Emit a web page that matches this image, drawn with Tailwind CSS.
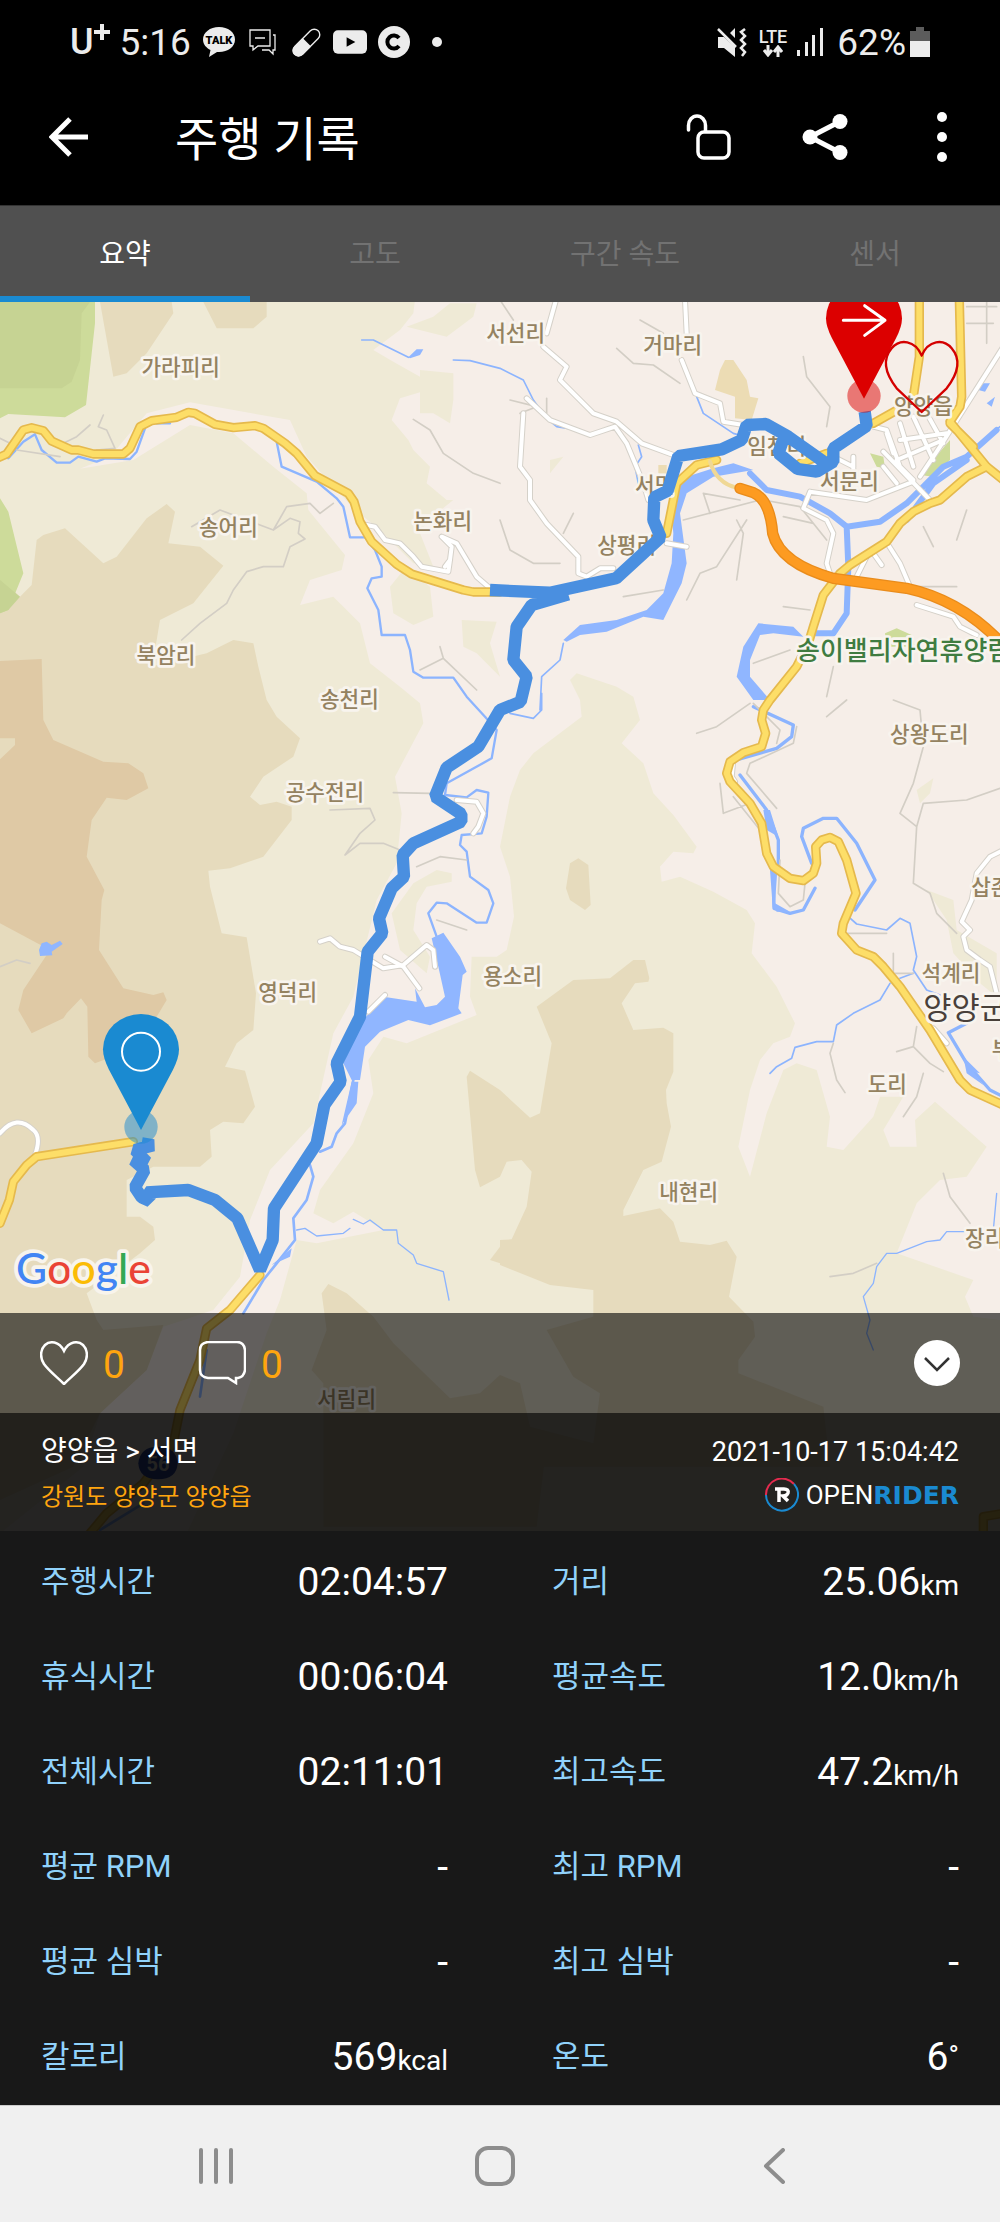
<!DOCTYPE html>
<html lang="ko">
<head>
<meta charset="utf-8">
<meta name="viewport" content="width=device-width, initial-scale=1">
<title>주행 기록</title>
<script src="https://cdn.jsdelivr.net/npm/@tailwindcss/browser@4"></script>
</head>
<body class="bg-black text-white font-[Roboto,'Noto_Sans_CJK_KR',sans-serif]">

<!-- Status bar -->
<div class="flex h-[84px] items-center pl-[70px] pr-[70px] text-[#ececec]">
  <span class="text-[36px] font-medium leading-none flex items-start">U<svg class="h-[16px] w-[16px]" viewBox="0 0 16 16" fill="none" stroke="currentColor" stroke-width="4"><path d="M8 0v16M0 8h16"/></svg></span>
  <span class="ml-[10px] text-[37px] leading-none">5:16</span>
  <svg class="ml-3 h-8 w-8" viewBox="0 0 32 32" fill="currentColor"><path d="M16 1C7 1 0 6.500 0 13.500c0 5 3.500 8.500 7.500 10.500L6 31l8-5h2c9 0 16-5 16-12.500S25 1 16 1z"/><text x="16" y="18" text-anchor="middle" font-size="11" font-weight="900" fill="#000">TALK</text></svg>
  <svg class="ml-[14px] h-[27px] w-[27px]" viewBox="0 0 27 27" fill="none" stroke="currentColor" stroke-width="1.300"><path d="M1 1h20v16H9l-5 4v-4H1zM6 9h10M24 6h2v15h-2v4l-4-4h-7"/></svg>
  <svg class="ml-4 h-[29px] w-[29px]" viewBox="0 0 29 29"><g transform="rotate(45 14.500 14.500)"><rect x="9" y="-2" width="11" height="33" rx="5.500" fill="none" stroke="currentColor" stroke-width="1.400"/><path d="M8.500 14h12v12a6 6 0 0 1-12 0z" fill="currentColor"/></g></svg>
  <svg class="ml-3 h-6 w-[34px]" viewBox="0 0 35 24"><rect width="35" height="24" rx="5" fill="currentColor"/><path d="M14 7v10l9-5z" fill="#000"/></svg>
  <svg class="ml-[11px] h-8 w-8" viewBox="0 0 32 32"><circle cx="16" cy="16" r="16" fill="currentColor"/><path d="M21 12a6.500 6.500 0 1 0 0 8" fill="none" stroke="#000" stroke-width="4"/></svg>
  <span class="ml-[22px] h-[10px] w-[10px] rounded-full bg-[#ececec]"></span>
  <svg class="ml-auto h-[29px] w-[30px]" viewBox="0 0 30 29"><path d="M1 9h6v11H1zM7 9l11 10v10L7 20zM13 5l5-5v10z" fill="currentColor"/><path d="M1 1l18 18M28 1l-4 3 4 4-4 4 4 4-4 4 4 4-3 4" fill="none" stroke="currentColor" stroke-width="2.500"/></svg>
  <span class="ml-3 flex flex-col items-center text-[18px] font-medium leading-[17px]">LTE
    <svg class="h-3 w-5" viewBox="0 0 20 12" fill="none" stroke="currentColor" stroke-width="3"><path d="M5 0v9M1 5l4 5 4-5M15 12V3M11 7l4-5 4 5"/></svg>
  </span>
  <svg class="ml-[10px] h-7 w-[26px]" viewBox="0 0 26 28" fill="currentColor"><path d="M0 22h3v6H0zM8 14h3v14H8zM15 7h3v21h-3zM23 0h3v28h-3z"/></svg>
  <span class="ml-[14px] text-[37px] leading-none">62%</span>
  <svg class="ml-1 h-[30px] w-5" viewBox="0 0 20 30"><path d="M6 0h8v4h6v10H0V4h6z" fill="#5c5c5c"/><path d="M0 14h20v16H0z" fill="currentColor"/></svg>
</div>

<!-- App bar -->
<header class="flex h-[121px] items-center pb-[15px] pl-[49px] pr-[53px]">
  <button aria-label="뒤로"><svg class="block h-10 w-10" viewBox="0 0 40 40" fill="none" stroke="#fff" stroke-width="5"><path d="M39 20H4M21 2L3 20l18 18"/></svg></button>
  <h1 class="ml-[86px] pt-1 text-[47px] leading-none">주행 기록</h1>
  <button class="ml-auto" aria-label="잠금 해제"><svg class="block h-[46px] w-[46px]" viewBox="0 0 46 46" fill="none" stroke="#fff" stroke-width="3.500" stroke-linecap="round"><path d="M2.500 16v-4.500a8.500 9.500 0 0 1 17 0V17"/><rect x="12" y="18" width="31" height="26" rx="6"/></svg></button>
  <button class="ml-[70px]" aria-label="공유"><svg class="block h-[46px] w-[46px]" viewBox="0 0 46 46" fill="#fff" stroke="#fff" stroke-width="5"><path d="M38 7.500L8 23l30 15.500" fill="none"/><g stroke="none"><circle cx="38" cy="7.500" r="7.500"/><circle cx="8" cy="23" r="7.500"/><circle cx="38" cy="38.500" r="7.500"/></g></svg></button>
  <button class="ml-[89px]" aria-label="더보기"><svg class="block h-[52px] w-[10px]" viewBox="0 0 10 52" fill="#fff"><circle cx="5" cy="6" r="5"/><circle cx="5" cy="26" r="5"/><circle cx="5" cy="46" r="5"/></svg></button>
</header>

<!-- Tabs -->
<nav class="grid h-[97px] grid-cols-4 border-t border-[#333] bg-[#505050] text-[28px] text-[#727272]" role="tablist">
  <button role="tab" aria-selected="true" class="border-b-[6px] border-[#1a8ad1] pt-2 text-white">요약</button>
  <button role="tab" class="border-b-[6px] border-transparent pt-2">고도</button>
  <button role="tab" class="border-b-[6px] border-transparent pt-2">구간 속도</button>
  <button role="tab" class="border-b-[6px] border-transparent pt-2">센서</button>
</nav>

<!-- Map with overlay bars -->
<section class="relative">
  <svg class="block w-full" viewBox="0 906 3000 3687" fill="none" stroke-linejoin="round" stroke-linecap="round" role="img" aria-label="주행 경로 지도">
    <defs>
      <path id="road-west" d="M-20 1380L20 1362L70 1290L95 1283L130 1292L155 1323L215 1350L235 1350L280 1362H370L390 1345L420 1280L455 1262L530 1252L565 1237L585 1240L645 1273L700 1283L765 1277L790 1285L855 1330L890 1360L945 1427L1045 1480L1062 1505L1080 1565L1115 1625L1190 1693L1235 1722L1390 1770L1420 1776H1500"/>
      <path id="road-nw" d="M2758 900V1070L2740 1190M2878 900L2885 1190L2880 1220L2850 1265L2960 1400L3010 1440M2620 1270L2700 1225M2850 1270L2920 1340"/>
      <path id="road-sm" d="M2000 1600L2030 1450L2090 1395L2150 1380M2480 1360L2400 1390"/>
      <path id="road-east" d="M2960 1400L2900 1430L2820 1500L2790 1510L2740 1535L2700 1570L2660 1625L2550 1695L2520 1720L2470 1785L2440 1880L2425 1930L2390 2000L2310 2100L2290 2130L2285 2160L2297 2200L2285 2240L2230 2258L2190 2285L2180 2320L2190 2345L2250 2410L2285 2470L2300 2560L2320 2600L2370 2635L2410 2642L2440 2620L2450 2590L2447 2540L2465 2520L2490 2512L2515 2525L2540 2580L2568 2680L2530 2770L2525 2800L2570 2850L2620 2870L2650 2900L2700 2960L2790 3090L2880 3240L2910 3270L3020 3320"/>
      <path id="road-sw" d="M400 3425L110 3470L80 3495L40 3545L28 3600L0 3670M780 3825L690 3930L620 3985L600 4080L540 4230L520 4330L430 4450L320 4540L270 4600M2950 4600V4550L3010 4540"/>
      <path id="highway" d="M2220 1465L2260 1478Q2310 1500 2318 1600Q2340 1690 2500 1735L2720 1765Q2880 1800 3000 1925"/>
      <path id="lanes" d="M1668 900L1640 1000M1630 1040L1700 1100L1680 1140L1780 1240L1850 1265L1925 1330L2020 1365M1580 1195L1650 1260L1770 1305L1845 1280L1880 1330L1930 1450L1945 1500M1570 1240L1560 1400L1590 1440V1500L1640 1570L1735 1670V1720L1760 1730L1800 1705H1840M2055 900L2060 1000M2045 1080L2085 1180L2160 1210L2170 1265L2230 1275M3010 1040L2820 1340L2760 1430M2650 1355L2790 1500M2690 1450L2650 1400M2430 1475L2410 1525L2480 1560L2500 1600L2480 1690L2490 1720M2430 1475L2600 1500L2740 1445M2665 1635L2700 1690L2730 1760M2750 1815L2860 1850L2880 1880L2930 1905M2600 1670L2570 1730M2620 1660L2645 1695M2620 1280L2660 1290L2700 1400L2740 1440M2700 1320L2840 1300M2690 1380L2830 1320M2740 1250L2800 1380M2700 1270L2740 1400M2780 1240L2830 1330M2660 1300L2680 1360M2500 1370L2560 1400M2560 1370V1410M2000 1630L2060 1640M1090 1573L1125 1580L1155 1620L1200 1630L1240 1670L1265 1700L1345 1715L1350 1680L1355 1640L1325 1610L1370 1630L1430 1730L1470 1765M1350 1680L1335 1700M1370 2400L1430 2405L1450 2440L1435 2480L1420 2500M960 2825L990 2815L1020 2840L1060 2850L1150 2905L1210 2895L1280 2835L1300 2850L1305 2900M1155 2870L1210 2900L1258 2965M1105 3035L1155 2985M3010 2550L2970 2570L2930 2620L2915 2700L2885 2765L2910 2790L2890 2810L2900 2850L2940 2880L2970 2900L2990 2980M0 3400Q50 3340 100 3390Q125 3410 105 3465M2200 2280L2195 2330L2205 2345M2800 3085L2840 3130"/>
    </defs>

    <!-- Terrain -->
    <path fill="#f6eee8" d="M0 900h3000v3700H0z"/>
    <g fill="#efead6">
      <path d="M0 900H1245L1240 940L1200 990L1120 1050L1180 1085L1260 1130L1265 1175L1200 1195L1175 1260L1225 1320L1240 1350L1290 1400L1280 1450L1340 1500L1360 1500L1285 1560L1260 1600L1300 1700L1240 1690L1140 1590L1060 1525L920 1370L870 1260L570 1207L440 1240L330 1370L240 1406L400 1380L570 1275L700 1300L820 1400L920 1480L925 1530L1035 1665L1025 1710L930 1740L900 1815L1000 1790L1080 1870L1110 1990L1200 2060L1260 2110L1270 2170L1185 2330L1205 2440L1190 2590L1130 2700L1060 2990L1000 3100L960 3280L940 3370L810 3510L750 3660L720 3830L640 3930L490 3980L440 4110L300 4240L250 4400L0 4600z"/>
      <path d="M1740 2100L1745 2150L1600 2260L1560 2310L1530 2390L1500 2540L1530 2630L1542 2750L1520 2850L1490 2870L1415 2870L1410 2990L1430 3045L1220 3130L1150 3110L1105 3180L1120 3280L1060 3430L960 3570L940 3640L1000 3670L1060 3635L1150 3690L950 3730L890 3720L840 3900L800 4000L700 4300L560 4600H3000V3960L2920 3950L2895 3890L2920 3840L2690 3760L2750 3610L2820 3540L2900 3530L2960 3440L2805 3305L2745 3360L2750 3440L2670 3440L2650 3390L2710 3290H2640L2620 3350L2530 3450L2480 3440L2490 3350L2450 3210L2390 3190L2350 3210L2300 3340L2250 3530L2215 3440L2250 3270L2280 3180L2320 3130L2370 3110L2385 3070L2330 2960L2255 2860L2265 2770L2240 2730L2140 2675L2040 2630L1985 2645L1980 2600L2020 2555L2080 2560L2090 2540L2020 2445L1960 2380L1930 2290L1865 2230L1920 2160L1900 2090L1850 2060L1730 2020L1710 2040z"/>
      <path d="M1175 2740L1240 2650L1310 2610L1355 2620V2645L1280 2660L1250 2710L1240 2790L1290 2870L1280 2920L1200 2850zM1170 1760L1215 1705L1290 1760L1300 1850L1240 1875L1180 1840zM1260 1110L1360 1120V1200L1350 1270L1300 1240L1260 1240zM1220 980L1300 950L1350 910L1430 910L1420 950L1340 1010zM1385 1860L1490 1865L1470 1930L1500 2030L1430 1960L1390 1940zM2750 2370L2800 2335L2790 2380L2760 2410zM2780 2670L2860 2700L2870 2790L2990 2860V2990L2940 2950L2860 2860L2840 2760zM1650 1380L1690 1370L1650 1420z"/>
    </g>
    <g fill="#e6dbbd">
      <path d="M300 906H515L520 940L440 1060L380 1120L340 1130zM610 906H800L800 950L760 985L650 985zM0 1735L60 1790L95 1755L110 1620L130 1605L195 1585L310 1690L350 1670L440 1555L500 1512L525 1535L505 1630L600 1640L670 1697L580 1810L480 1860L465 1950L450 2000L620 1960L700 1920L760 1930L775 2000L800 2100L830 2150L900 2215L880 2270L790 2330L750 2390L780 2415L830 2405L875 2420V2460L790 2570L690 2605L625 2612L630 2660L665 2800L740 2812L768 2980L760 3090L710 3130L675 3200L735 3212L765 3320L730 3370L670 3365L630 3390L635 3470L600 3500L460 3500L380 3540V3650L420 3650L460 3680L465 3720L420 3760L260 3880L290 3960L310 3990L490 3975L440 4110L300 4240L220 4400L0 4500z"/>
      <path d="M1735 2575L1765 2595L1772 2715L1755 2730L1710 2700L1698 2665L1710 2590zM1830 2935L1900 2880L1935 2880L1948 2935L1945 2945L1905 2950L1865 3010L1900 3090L1990 3083L2020 3100V3215L1998 3270L2000 3310L2013 3380L1985 3485L1930 3510L1870 3630V3648L1980 3625L2020 3665L2040 3725L2130 3735L2180 3722L2210 3770L2187 3890L2260 3965L2265 4010L2215 4080V4120L2470 4220L2490 4400H1500L1560 4320L1640 4330L1610 4580H970V4150L935 4110L980 3990L965 3880L985 3852L1040 3880L1120 3950L1180 4030L1350 4195L1440 4180L1500 4125L1560 4150L1590 4280L1780 4330L1800 4180L1720 4130L1640 3990L1780 3950L1780 3870L1650 3855L1500 3795V3720L1535 3718L1580 3620L1595 3515L1565 3480L1520 3485L1500 3530L1440 3562L1425 3510L1400 3230L1410 3212L1500 3270L1590 3353L1620 3340L1655 3130L1610 3020L1720 2940z"/>
      <path fill="#ecdcb4" d="M2175 1080L2200 1080L2240 1140L2250 1190L2275 1195L2255 1260L2205 1255V1190L2145 1170L2160 1110zM1975 1395L2000 1395V1430L1975 1420z"/>
      <path d="M1470 3780L1500 3740V3790z"/>
    </g>
    <path fill="#dfc9a5" d="M0 1983L125 1977L130 2160L160 2220L310 2285L385 2290L430 2320L445 2365L380 2400L320 2393L275 2460L260 2570L313 2670L305 2700L297 2850L370 2965L460 2985L490 2977L500 3000L470 3050V3120L285 3190L265 3170L262 3020L243 2995L200 3040L190 3055L95 3100L55 3030L70 2970L150 2850L0 2770z"/>
    <path fill="#e6dbbd" d="M0 2215H45L45 2235L0 2278z"/>
    <path fill="#cddb9a" d="M0 906H285V970L258 1215L195 1252L25 1242L0 1255zM0 1495L25 1535L70 1720L25 1830L0 1840zM2610 1360L2650 1370L2655 1405L2630 1400zM2850 1320L2850 1380L2800 1430L2760 1425zM2655 1900L2690 1885L2735 1905L2745 1940H2660z"/>
    <path fill="#c6d393" d="M0 906H270L245 940L240 1080L215 1145L185 1165H0zM0 1740L60 1790L25 1830L0 1840z"/>

    <!-- Rivers -->
    <g stroke="#8cb4fe" stroke-width="7">
      <path d="M25 1375L70 1325L105 1303L125 1350L170 1388H210L235 1370L290 1385L315 1375L390 1377L410 1355L435 1285M470 1270H510M830 1325L845 1400L950 1445L1010 1495L1030 1520L1050 1612H1095L1125 1650L1145 1700V1730L1115 1735L1102 1765L1135 1830L1145 1905L1215 1905L1230 1950L1240 2015L1270 2033H1360L1400 2090L1455 2150L1490 2190L1475 2275L1340 2350L1335 2385L1400 2392L1430 2370L1465 2378L1460 2450L1445 2500L1385 2505L1380 2535L1400 2555L1410 2630L1465 2670L1480 2710L1460 2768H1430L1340 2710L1310 2708L1285 2740L1310 2810"/>
      <path d="M1085 1020H1120L1225 1072M1360 1080L1410 1082L1500 1105L1570 1140L1600 1200L1640 1255L1670 1280L1730 1290M1915 1335L1925 1370L1905 1400L1915 1450M2090 1190L2110 1240L2200 1300L2270 1320M2930 1340L3000 1280M1620 2130L1625 2030L1680 1980L1690 1930M1625 2080V2130L1600 2155L1530 2140" stroke-width="5"/>
      <path d="M2545 2750L2570 2772L2660 2790L2700 2755L2730 2770L2750 2870L2740 2910L2780 2970L2820 2985M2670 2950L2640 3000L2560 3040L2510 3075L2500 3125H2450L2385 3142L2375 3175L2330 3200L2310 3220M2740 2920L2700 2935" stroke-width="5"/>
      <path d="M2260 2120L2380 2175L2375 2210L2330 2245L2220 2277M2220 2325L2300 2430L2335 2520L2335 2600L2320 2620L2322 2725L2370 2740L2410 2730L2445 2665M2435 2590L2405 2510L2410 2485L2470 2455H2510L2570 2530L2625 2640L2565 2730M2900 3070L2845 3098L2900 3190L2970 3270L3000 3285" stroke-width="10"/>
      <path d="M890 3690L915 3685L950 3708L1030 3700L1050 3685M1060 3658L1090 3672L1110 3660L1150 3690H1190L1195 3730L1240 3765L1250 3790L1330 3815L1347 3900M2990 3580L2980 3690L2960 3695L2840 3695L2820 3720L2780 3725L2690 3760L2660 3760L2630 3800L2620 3850L2590 3890L2610 3960L2600 4000L2620 4050" stroke-width="4"/>
      <path d="M1060 3240L1035 3370L1010 3400L995 3440L960 3455M930 3495L940 3530L920 3600L880 3655L885 3720L830 3790L790 3840L730 3940M620 4050L600 4190M430 4510L300 4590" stroke-width="8"/>
      <path d="M2250 1420L2300 1470L2400 1490L2490 1540L2540 1580L2640 1565L2720 1510L2830 1400L2900 1370L2990 1290M2540 1580L2545 1700L2540 1840L2500 1900L2430 1900M2720 1560L2800 1450L2900 1380" stroke-width="18"/>
    </g>
    <g fill="#90b6ff">
      <path d="M2140 1405L2060 1430L2010 1500L2020 1600L2015 1690L1990 1780L1940 1830L1850 1860L1740 1875L1690 1920L1700 1925L1740 1905L1820 1895L1930 1850L1990 1860L2015 1810L2045 1750L2060 1690L2040 1540L2060 1480L2140 1430L2260 1410L2200 1390zM2275 1870L2380 1880L2410 1910L2320 1900L2280 1905L2250 1980V2030L2310 2100L2260 2100L2210 2030L2230 1940zM2940 1150L2970 1150L2955 1175L2935 1170zM2960 1210L2985 1190L2975 1220zM1225 1072L1250 1048H1270L1260 1065L1230 1075z"/>
      <path d="M1295 2815L1330 2798L1380 2870L1400 2915L1388 2925L1375 3025L1385 3040L1290 3076L1225 3060L1140 3095L1095 3140L1080 3240H1055L1030 3190L1090 3060L1150 2990L1250 3005L1245 2965L1275 3022L1310 3015L1335 2990L1315 2900zM1055 3245H1075L1070 3310L1025 3375zM117 2850L125 2830L140 2825L155 2835L180 2822L188 2832L155 2855L157 2866L120 2868zM2290 2430L2310 2430L2335 2510L2300 2490zM2310 2610H2332L2325 2710L2370 2735L2330 2735L2318 2720zM2890 3170L2940 3220L2920 3215L2950 3255L2900 3220zM815 3795L875 3745L870 3770z"/>
    </g>

    <!-- Footpaths and minor streets -->
    <g stroke="#d3cec5" stroke-width="5">
      <path d="M190 1330L230 1310L270 1275M290 1350L345 1345L320 1290L295 1280L310 1245M50 1350L180 1370M0 1315L30 1330M575 1580L660 1530L780 1575L820 1590L860 1520L930 1510L960 1540L1000 1510M820 1590L870 1555L900 1565L895 1600L915 1617L870 1640L850 1700L790 1700L740 1715L700 1770L680 1810L600 1870L545 1920"/>
      <path d="M1240 1258L1290 1290L1330 1360L1420 1420L1500 1450M1320 1940L1330 1975L1260 2010M1330 1975L1430 2070M1180 2378L1290 2380M990 2430L1110 2425L1125 2460L1080 2500L1035 2565L1080 2530L1150 2530L1200 2550M1250 2600L1320 2570L1400 2580M1310 2760L1400 2790"/>
      <path d="M1850 1045L1900 1090L1960 1095L2040 1150M1920 960L1990 1000M2410 1070L2420 1130L2490 1220L2480 1280M1500 900L1540 960M1530 1200L1610 1220L1560 1240M2050 1560L2280 1500M2130 1540L2110 1480L2220 1500M2210 1560L2230 1600L2210 1740M2060 1800L2100 1720L2150 1700L2240 1560M1870 1790L1990 1770M1720 1540L1690 1600M1500 1560L1530 1650L1600 1690L1680 1690M2290 1500L2400 1520L2480 1620M2350 1550L2440 1570M2770 1580L2800 1640M2900 1530L2870 1620M2760 1760L2870 1760M2350 1820L2430 1830M2260 1990L2370 1950M2090 2200L2150 2180L2250 2110M2540 2100L2480 2150M2680 2100L2760 2130L2770 2240L2740 2350L2700 2440L2750 2480L2740 2650L2790 2680L2810 2740L2870 2800M2750 2480L2770 2410L2900 2400L3000 2365M2160 2350L2170 2440L2250 2410M2200 2390L2280 2490M2340 2580L2335 2680L2370 2720L2410 2700L2415 2650M2540 2800L2660 2800M2680 2860V2920L2740 2920M2500 3130L2490 3160L2510 3240L2535 3278M2750 3080L2740 3140L2690 3155M2740 3140L2790 3190L2830 3215M2770 3220L2750 3290L2710 3350M2830 3520L2850 3590L2910 3670M2490 3830L2560 3820L2630 3790M0 2900L50 2880L90 2890M2870 1000V1080M2900 920H2990M2900 970H2980M2960 900V1030"/>
      <path d="M2260 2110L2340 2190L2330 2230M2390 2180L2380 2230L2250 2290L2240 2320L2330 2425M1640 1195V1240M2500 2000L2480 2090"/>
    </g>
    <g stroke="#d5d1c9" stroke-width="18"><use href="#lanes"/></g>
    <g stroke="#fff" stroke-width="12"><use href="#lanes"/></g>

    <!-- Trunk roads -->
    <g stroke="#e5b94d" stroke-width="28"><use href="#road-west"/><use href="#road-nw"/><use href="#road-east"/><use href="#road-sw"/><use href="#road-sm"/></g>
    <g stroke="#fdde68" stroke-width="18"><use href="#road-west"/><use href="#road-nw"/><use href="#road-east"/><use href="#road-sw"/><use href="#road-sm"/></g>
    <path stroke="#f0d895" stroke-width="12" d="M2130 1385Q2150 1450 2210 1463"/>
    <use href="#highway" stroke="#e98c1c" stroke-width="34"/>
    <use href="#highway" stroke="#fd9b21" stroke-width="26"/>

    <!-- Route 56 shield -->
    <g><path fill="#304ba8" d="M415 4390Q420 4340 474 4340Q530 4340 533 4390Q530 4438 474 4438Q418 4438 415 4390z"/><text x="474" y="4412" text-anchor="middle" font-size="60" font-weight="700" fill="#e8e4dc">56</text></g>

    <!-- Place names -->
    <g font-size="64" font-weight="500" fill="#948260" stroke="#f8f4ee" stroke-width="16" paint-order="stroke" text-anchor="middle">
      <text x="542" y="1124">가라피리</text><text x="1547" y="1024">서선리</text><text x="2018" y="1059">거마리</text><text x="2770" y="1241">양양읍</text><text x="2330" y="1361">임천리</text><text x="1964" y="1480">서면</text><text x="2548" y="1468">서문리</text><text x="685" y="1605">송어리</text><text x="1328" y="1586">논화리</text><text x="1880" y="1658">상평리</text><text x="498" y="1990">북암리</text><text x="1048" y="2122">송천리</text><text x="975" y="2401">공수전리</text><text x="2788" y="2225">상왕도리</text><text x="3002" y="2684">삽존리</text><text x="863" y="2999">영덕리</text><text x="1538" y="2951">용소리</text><text x="2853" y="2943">석계리</text><text x="3093" y="3171">부소치리</text><text x="2662" y="3277">도리</text><text x="2066" y="3600">내현리</text><text x="2954" y="3738">장리</text><text x="1040" y="4222">서림리</text>
      <text x="2388" y="1981" font-size="78" fill="#3f7c41" text-anchor="start">송이밸리자연휴양림</text>
      <text x="2770" y="3057" font-size="92" font-weight="400" fill="#49403a" text-anchor="start">양양군</text>
    </g>

    <!-- Recorded track -->
    <path stroke="#4a8fe0" stroke-width="37" stroke-linecap="butt" stroke-linejoin="bevel" d="M2594 1235L2600 1278L2500 1345V1385L2450 1415L2393 1407L2335 1360L2350 1318M2485 1395L2365 1310L2298 1272L2240 1275L2225 1320L2165 1348L2035 1368L2003 1472L1963 1492L1960 1560L1982 1612L1848 1735L1650 1778L1470 1770M1705 1783L1595 1815L1550 1880L1540 1980L1580 2030L1562 2105L1500 2130L1435 2240L1340 2303L1305 2390L1384 2442V2465L1240 2530L1208 2565L1212 2630L1175 2665L1137 2755L1147 2800L1103 2855L1080 3050L1010 3190L1022 3245L973 3315L950 3430L822 3625L818 3720L780 3810L712 3655L645 3600L565 3570L440 3577L450 3603L425 3592L405 3562L434 3510L400 3480L440 3486L405 3450L460 3436L425 3430"/>

    <!-- Finish and start pins -->
    <circle cx="2592" cy="1188" r="50" fill="#dc0000" fill-opacity=".5"/>
    <path fill="#dc0000" d="M2592 1196L2496 1015Q2478 980 2478 955A114 108 0 0 1 2706 955Q2706 980 2688 1015z"/>
    <path stroke="#fff" stroke-width="9" d="M2530 961H2655M2594 917L2655 961L2594 1006"/>
    <path stroke="#d40000" stroke-width="7" d="M2765 1067C2745 1020 2700 1015 2675 1045C2645 1080 2655 1120 2690 1165L2765 1236L2840 1165C2875 1120 2885 1080 2855 1045C2830 1015 2785 1020 2765 1067z"/>
    <circle cx="423" cy="3381" r="50" fill="#1a8ad1" fill-opacity=".5"/>
    <path fill="#1a8ad1" d="M423 3390L327 3209Q309 3174 309 3148A114 106 0 0 1 537 3148Q537 3174 519 3209z"/>
    <circle cx="423" cy="3155" r="57" stroke="#fff" stroke-width="6"/>

    <!-- Map provider mark -->
    <text x="48" y="3852" font-family="Lato" font-size="128" font-weight="500" stroke="#f8f4ec" stroke-width="22" paint-order="stroke"><tspan fill="#4285f4">G</tspan><tspan fill="#ea4335">o</tspan><tspan fill="#fbbc05">o</tspan><tspan fill="#4285f4">g</tspan><tspan fill="#34a853">l</tspan><tspan fill="#ea4335">e</tspan></text>
  </svg>

  <div class="absolute inset-x-0 bottom-0">
    <div class="flex h-[100px] items-center bg-black/60 px-[40px] text-[39px] leading-none text-[#ffa50f]">
      <button class="flex items-center" aria-label="좋아요"><svg class="h-11 w-12" viewBox="0 0 48 44" fill="none" stroke="#fff" stroke-width="2.500"><path d="M24 10C19 0 10-.500 5 4C0 9 0 17 4 23C9 30 17 36 24 43C31 36 39 30 44 23C48 17 48 9 43 4C38-.500 29 0 24 10z"/></svg><span class="ml-[15px] pt-1">0</span></button>
      <button class="ml-[73px] flex items-center" aria-label="댓글"><svg class="h-11 w-12" viewBox="0 0 48 44" fill="none" stroke="#fff" stroke-width="2.500"><path d="M10 1h29q7 0 8 8v20q-1 7-7 8h-2v5l-8-5H10q-8-1-8-8V9q0-7 8-8z"/></svg><span class="ml-[15px] pt-1">0</span></button>
      <button class="ml-auto" aria-label="접기"><svg class="block h-[46px] w-[46px]" viewBox="0 0 46 46"><circle cx="23" cy="23" r="23" fill="#fff"/><path d="M11 18l12 12 12-12" fill="none" stroke="#333" stroke-width="2.500"/></svg></button>
    </div>
    <div class="flex h-[118px] items-center justify-between bg-black/85 px-[41px] pt-[6px]">
      <div>
        <p class="text-[28px] leading-[44px]">양양읍 &gt; 서면</p>
        <p class="text-[24px] leading-[46px] text-[#ffa50f]">강원도 양양군 양양읍</p>
      </div>
      <div class="flex flex-col items-end">
        <time class="text-[27px] leading-[44px]">2021-10-17 15:04:42</time>
        <div class="flex h-[46px] items-center pb-1">
          <svg class="h-[34px] w-[34px]" viewBox="0 0 34 34" fill="none" stroke-width="2"><path d="M1 17A16 16 0 0 1 29 6" stroke="#e52b4f"/><path d="M29 6A16 16 0 1 1 1 17" stroke="#1a8ad1"/><path d="M10 11h9q5 0 4 4-1 3-5 3l5 5M14 12v12" stroke="#fff" stroke-width="3.500"/></svg>
          <span class="ml-[7px] text-[26px] leading-none">OPEN</span><span class="font-['DejaVu_Sans'] text-[25px] font-bold leading-none text-[#1a8ad1]">RIDER</span>
        </div>
      </div>
    </div>
  </div>
</section>

<!-- Ride statistics -->
<dl class="grid h-[574px] grid-cols-2 grid-rows-6 gap-x-[104px] bg-[#181818] px-[41px] pt-1 text-[39px]">
  <div class="flex items-center justify-between"><dt class="text-[31px] text-[#90d2fb]">주행시간</dt><dd>02:04:57</dd></div>
  <div class="flex items-center justify-between"><dt class="text-[31px] text-[#90d2fb]">거리</dt><dd>25.06<span class="text-[28px]">km</span></dd></div>
  <div class="flex items-center justify-between"><dt class="text-[31px] text-[#90d2fb]">휴식시간</dt><dd>00:06:04</dd></div>
  <div class="flex items-center justify-between"><dt class="text-[31px] text-[#90d2fb]">평균속도</dt><dd>12.0<span class="text-[28px]">km/h</span></dd></div>
  <div class="flex items-center justify-between"><dt class="text-[31px] text-[#90d2fb]">전체시간</dt><dd>02:11:01</dd></div>
  <div class="flex items-center justify-between"><dt class="text-[31px] text-[#90d2fb]">최고속도</dt><dd>47.2<span class="text-[28px]">km/h</span></dd></div>
  <div class="flex items-center justify-between"><dt class="text-[31px] text-[#90d2fb]">평균 RPM</dt><dd>-</dd></div>
  <div class="flex items-center justify-between"><dt class="text-[31px] text-[#90d2fb]">최고 RPM</dt><dd>-</dd></div>
  <div class="flex items-center justify-between"><dt class="text-[31px] text-[#90d2fb]">평균 심박</dt><dd>-</dd></div>
  <div class="flex items-center justify-between"><dt class="text-[31px] text-[#90d2fb]">최고 심박</dt><dd>-</dd></div>
  <div class="flex items-center justify-between"><dt class="text-[31px] text-[#90d2fb]">칼로리</dt><dd>569<span class="text-[28px]">kcal</span></dd></div>
  <div class="flex items-center justify-between"><dt class="text-[31px] text-[#90d2fb]">온도</dt><dd>6<span class="align-[5px] text-[28px]">°</span></dd></div>
</dl>

<!-- System navigation -->
<nav class="flex h-[117px] items-center justify-between border-t border-[#ccc] bg-[#f0f0f0] pl-[196px] pr-[206px] pt-1">
  <button class="flex w-10 justify-center" aria-label="최근 앱"><svg class="block h-9 w-9" viewBox="0 0 36 36" fill="none" stroke="#8d8d8d" stroke-width="4" stroke-linecap="round"><path d="M3 2v32M18 2v32M33 2v32"/></svg></button>
  <button class="flex w-10 justify-center" aria-label="홈"><svg class="block h-10 w-10" viewBox="0 0 40 40" fill="none" stroke="#8d8d8d" stroke-width="4"><rect x="2" y="2" width="36" height="36" rx="11"/></svg></button>
  <button class="flex w-10 justify-center" aria-label="뒤로"><svg class="block h-9 w-[22px]" viewBox="0 0 22 36" fill="none" stroke="#8d8d8d" stroke-width="4" stroke-linecap="round" stroke-linejoin="round"><path d="M20 2L3 18l17 16"/></svg></button>
</nav>
</body>
</html>
